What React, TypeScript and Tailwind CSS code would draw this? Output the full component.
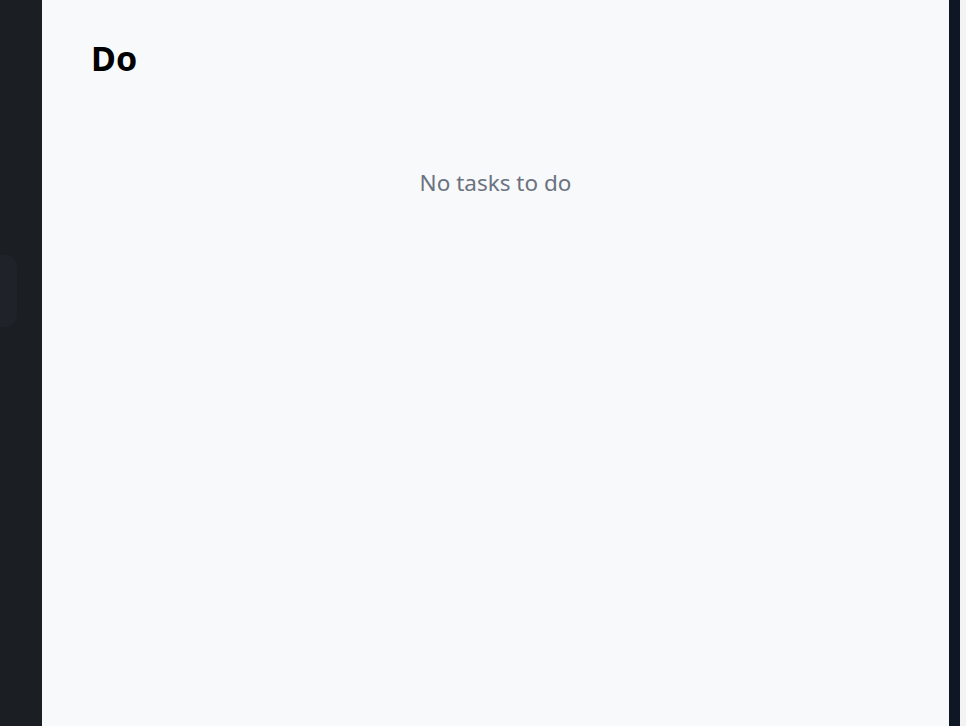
export default function App() {
  return (
    <div className="flex h-[726px] w-full overflow-hidden bg-[#1b1f24] font-['Noto_Sans',sans-serif]">
      <aside className="flex w-[42px] shrink-0 flex-col pt-[255px]">
        <div className="h-[72px] w-[17px] rounded-r-xl bg-[#1f2329]" />
      </aside>
      <main className="flex-1 bg-[#f8f9fb] px-[49px] pt-[30px]">
        <h1 className="text-[34px] font-bold leading-[56px] text-black">Do</h1>
        <p className="mt-[80px] text-center text-[22.5px] text-[#6b7280]">No tasks to do</p>
      </main>
      <div className="w-[11px] shrink-0 bg-[#0f1624]" />
      <div className="w-[6px] shrink-0 bg-[#f3f3f3]" />
    </div>
  );
}
